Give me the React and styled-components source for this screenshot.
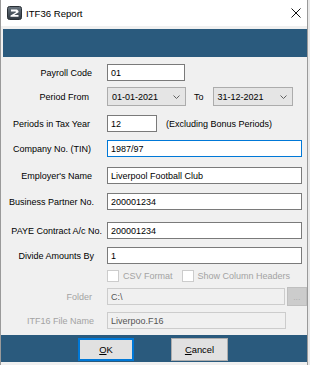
import React from "react";
import styled, { createGlobalStyle } from "styled-components";

const Global = createGlobalStyle`
  html, body {
    margin: 0;
    padding: 0;
    background: #e9e9e9;
  }
  * { box-sizing: border-box; }
`;

const Blue = "#2a5a7d";

const Window = styled.div`
  width: 308px;
  height: 365px;
  display: flex;
  flex-direction: column;
  border-left: 1px solid #9a9a9a;
  border-right: 1px solid #9a9a9a;
  background: #f0f0f0;
  font-family: "Liberation Sans", Arial, sans-serif;
  font-size: 9px;
  color: #000;
`;

const TitleBar = styled.div`
  height: 26px;
  background: #fff;
  display: flex;
  align-items: center;
  padding-left: 6px;
  padding-right: 5px;
`;

const TitleText = styled.div`
  font-size: 9.6px;
  margin-left: 4px;
  flex: 1;
  padding-top: 1px;
`;

const Banner = styled.div`
  height: 28px;
  margin: 3px 0 0 2px;
  background: ${Blue};
`;

const Form = styled.div`
  display: flex;
  flex-direction: column;
  padding-top: 7px;
`;

const Row = styled.div`
  display: flex;
  align-items: center;
  height: ${(p) => p.$h}px;
  margin-top: ${(p) => p.$mt}px;
`;

const Label = styled.div`
  width: 106px;
  flex-shrink: 0;
  text-align: right;
  white-space: nowrap;
  padding-right: ${(p) => 106 - p.$end}px;
  color: ${(p) => (p.$disabled ? "#a3a3a3" : "#000")};
`;

const TextBox = styled.div`
  width: ${(p) => p.$w}px;
  height: 17px;
  display: flex;
  align-items: center;
  padding-left: 3px;
  white-space: nowrap;
  background: ${(p) => (p.$disabled ? "#f0f0f0" : "#fff")};
  border: 1px solid
    ${(p) => (p.$focus ? "#0078d7" : p.$disabled ? "#cccccc" : "#7a7a7a")};
  color: ${(p) => (p.$disabled ? "#555" : "#000")};
`;

const Combo = styled.div`
  width: ${(p) => p.$w}px;
  height: 19px;
  display: flex;
  align-items: center;
  justify-content: space-between;
  padding: 0 5px 0 4px;
  background: #e5e5e5;
  border: 1px solid #acacac;
`;

const ToLabel = styled.div`
  margin: 0 9px 0 8px;
`;

const Note = styled.div`
  margin-left: 9px;
  white-space: nowrap;
`;

const CheckGroup = styled.div`
  display: flex;
  align-items: center;
  margin-right: ${(p) => p.$mr || 0}px;
`;

const Box = styled.div`
  width: 12px;
  height: 12px;
  border: 1px solid #cccccc;
  background: #fff;
  margin-right: 4px;
`;

const CheckText = styled.div`
  color: #a3a3a3;
  white-space: nowrap;
`;

const Browse = styled.div`
  width: 20px;
  height: 19px;
  margin-left: 2px;
  background: #cccccc;
  border: 1px solid #bfbfbf;
  display: flex;
  align-items: flex-end;
  justify-content: center;
  padding-bottom: 4px;
  color: #a0a0a0;
  font-size: 7px;
  letter-spacing: 0.5px;
`;

const Footer = styled.div`
  height: 27px;
  margin-top: 6px;
  background: ${Blue};
  display: flex;
  align-items: flex-start;
  padding: 3px 0 0 77px;
  gap: 37px;
`;

const Button = styled.div`
  width: ${(p) => p.$w}px;
  height: 23px;
  display: flex;
  align-items: center;
  justify-content: center;
  background: #e1e1e1;
  border: ${(p) => (p.$primary ? "2px solid #0078d7" : "1px solid #adadad")};
  font-size: 9.4px;
  u { text-decoration: underline; }
`;

const AppIcon = () => (
  <svg width="15" height="14" viewBox="0 0 15 14">
    <defs>
      <linearGradient id="ig" x1="0" y1="0" x2="0" y2="1">
        <stop offset="0" stopColor="#6b7680" />
        <stop offset="1" stopColor="#2f3841" />
      </linearGradient>
    </defs>
    <rect x="0.5" y="0.5" width="14" height="13" rx="2" fill="url(#ig)" stroke="#2a3036" />
    <path
      d="M4 3.5 H10 L11.5 5 V6.3 L7.2 9 H11.5 V10.8 H3.5 V9.6 L8.8 6.4 V5.4 H4 Z"
      fill="#fff"
    />
  </svg>
);

const CloseIcon = () => (
  <svg width="12" height="12" viewBox="0 0 12 12">
    <path d="M1.5 1.5 L10.5 10.5 M10.5 1.5 L1.5 10.5" stroke="#111" strokeWidth="1" />
  </svg>
);

const Chevron = () => (
  <svg width="7" height="4" viewBox="0 0 7 4">
    <path d="M0.5 0.5 L3.5 3.5 L6.5 0.5" stroke="#606060" strokeWidth="1" fill="none" />
  </svg>
);

export default function App() {
  return (
    <>
      <Global />
      <Window>
        <TitleBar>
          <AppIcon />
          <TitleText>ITF36 Report</TitleText>
          <CloseIcon />
        </TitleBar>
        <Banner />
        <Form>
          <Row $mt={0} $h={17}>
            <Label $end={91}>Payroll Code</Label>
            <TextBox $w={78}>01</TextBox>
          </Row>
          <Row $mt={6} $h={19}>
            <Label $end={88}>Period From</Label>
            <Combo $w={79}>
              01-01-2021
              <Chevron />
            </Combo>
            <ToLabel>To</ToLabel>
            <Combo $w={80}>
              31-12-2021
              <Chevron />
            </Combo>
          </Row>
          <Row $mt={9} $h={17}>
            <Label $end={89}>Periods in Tax Year</Label>
            <TextBox $w={50}>12</TextBox>
            <Note>(Excluding Bonus Periods)</Note>
          </Row>
          <Row $mt={8} $h={17}>
            <Label $end={90}>Company No. (TIN)</Label>
            <TextBox $w={195} $focus>1987/97</TextBox>
          </Row>
          <Row $mt={10} $h={17}>
            <Label $end={91}>Employer's Name</Label>
            <TextBox $w={195}>Liverpool Football Club</TextBox>
          </Row>
          <Row $mt={9} $h={17}>
            <Label $end={93}>Business Partner No.</Label>
            <TextBox $w={195}>200001234</TextBox>
          </Row>
          <Row $mt={12} $h={17}>
            <Label $end={101}>PAYE Contract A/c No.</Label>
            <TextBox $w={195}>200001234</TextBox>
          </Row>
          <Row $mt={8} $h={17}>
            <Label $end={93}>Divide Amounts By</Label>
            <TextBox $w={195}>1</TextBox>
          </Row>
          <Row $mt={6} $h={12}>
            <Label $end={93} />
            <CheckGroup $mr={9}>
              <Box />
              <CheckText>CSV Format</CheckText>
            </CheckGroup>
            <CheckGroup>
              <Box />
              <CheckText>Show Column Headers</CheckText>
            </CheckGroup>
          </Row>
          <Row $mt={5} $h={19}>
            <Label $end={91} $disabled>
              Folder
            </Label>
            <TextBox $w={179} $disabled>
              C:\
            </TextBox>
            <Browse>...</Browse>
          </Row>
          <Row $mt={6} $h={17}>
            <Label $end={93} $disabled>
              ITF16 File Name
            </Label>
            <TextBox $w={179} $disabled>
              Liverpoo.F16
            </TextBox>
          </Row>
        </Form>
        <Footer>
          <Button $w={56} $primary>
            <u>O</u>K
          </Button>
          <Button $w={57}>
            <u>C</u>ancel
          </Button>
        </Footer>
      </Window>
    </>
  );
}
